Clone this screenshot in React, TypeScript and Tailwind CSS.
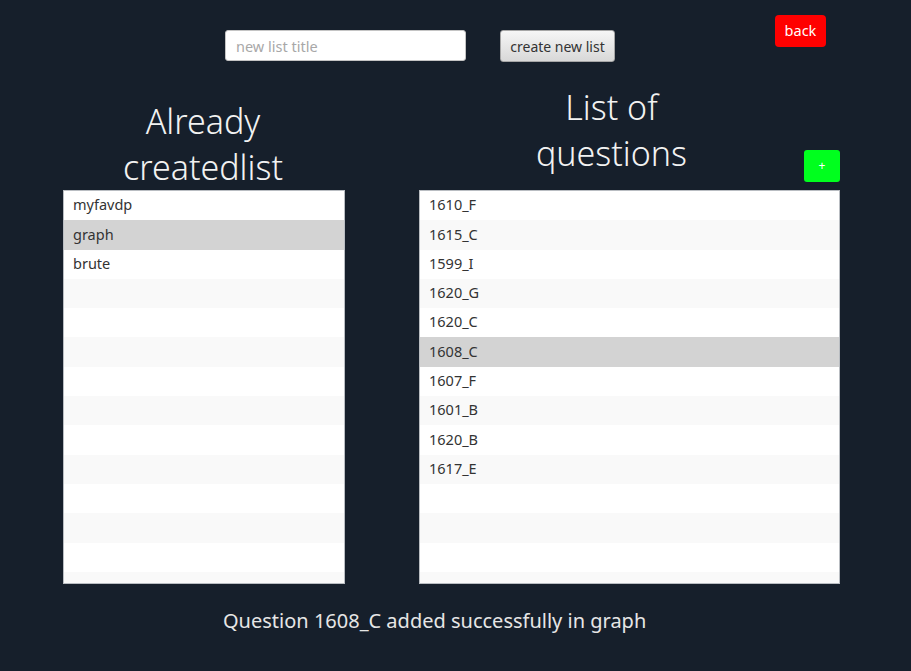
import React from 'react'

const font = { fontFamily: '"Noto Sans", "Open Sans", sans-serif' }

const lists = ['myfavdp', 'graph', 'brute']
const questions = ['1610_F', '1615_C', '1599_I', '1620_G', '1620_C', '1608_C', '1607_F', '1601_B', '1620_B', '1617_E']

function ListView({ items, selected, width }: { items: string[]; selected: number; width: string }) {
  const rows = Array.from({ length: 14 }, (_, i) => items[i] ?? '')
  return (
    <div className={`${width} h-[394px] overflow-hidden border border-[#b9bdc2] bg-white`}>
      {rows.map((item, i) => (
        <div
          key={i}
          className={`flex h-[29.3px] items-center pb-[1px] pl-[9px] text-[14.5px] text-[#333] ${
            i === selected ? 'bg-[#d3d3d3]' : i % 2 ? 'bg-[#f9f9f9]' : 'bg-white'
          }`}
        >
          {item}
        </div>
      ))}
    </div>
  )
}

export default function App() {
  return (
    <div className="min-h-[671px] bg-[#161f2b]" style={font}>
      <div className="flex items-start pl-[225px]">
        <input
          placeholder="new list title"
          className="mt-[30px] h-[31px] w-[241px] rounded-[3px] border border-[#c4c4c4] bg-white px-[10px] text-[14.5px] text-[#333] placeholder:text-[#a8a8a8] outline-none"
        />
        <button className="ml-[34px] mt-[30px] h-[32px] w-[115px] rounded-[3px] border border-[#a6a6a6] bg-gradient-to-b from-[#f6f6f6] to-[#d8d8d8] text-[14px] text-[#333]">
          create new list
        </button>
        <button className="ml-[160px] mt-[15px] h-[32px] w-[51px] rounded-[4px] bg-[#ff0000] text-[14.5px] text-white">
          back
        </button>
      </div>

      <div className="flex pl-[63px]">
        <div className="flex w-[282px] flex-col">
          <div className="flex h-[128px] items-end justify-center">
            <h1 className="mr-[2px] text-center text-[34px] font-light leading-[46px] text-[#f2f2f2]">
              Already
              <br />
              createdlist
            </h1>
          </div>
          <ListView items={lists} selected={1} width="w-[282px]" />
        </div>

        <div className="ml-[74px] flex w-[421px] flex-col">
          <div className="flex h-[128px] items-end">
            <h1 className="flex-1 pb-[14px] text-center text-[34px] font-light leading-[46px] text-[#f2f2f2]">
              List of
              <br />
              questions
            </h1>
            <button className="mb-[8px] h-[32px] w-[36px] rounded-[3px] bg-[#00ff1e] text-[12px] text-white">+</button>
          </div>
          <ListView items={questions} selected={5} width="w-[421px]" />
        </div>
      </div>

      <p className="ml-[223px] mt-[22px] text-[20px] text-[#e6e6e6]">Question 1608_C added successfully in graph</p>
    </div>
  )
}
